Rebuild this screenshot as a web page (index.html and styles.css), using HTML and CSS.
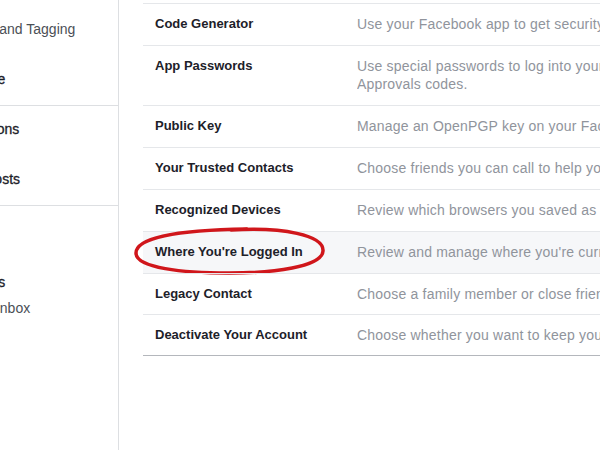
FILE: index.html
```html
<!DOCTYPE html>
<html lang="en">
<head>
    <meta charset="UTF-8">
    <title>Security Settings</title>
    <link rel="stylesheet" href="styles.css">
</head>
<body>
<div class="page">
    <!--左侧设置菜单-->
    <div class="sidebar">
        <ul class="group first">
            <li>Timeline and Tagging</li>
            <li>Blocking</li>
            <li class="dark">Language</li>
        </ul>
        <ul class="group">
            <li class="dark">Notifications</li>
            <li>Mobile</li>
            <li class="dark">Public Posts</li>
        </ul>
        <ul class="group last">
            <li>Apps</li>
            <li>Ads</li>
            <li class="dark">Payments</li>
            <li>Support Inbox</li>
            <li>Videos</li>
        </ul>
    </div>
    <!--安全设置列表-->
    <div class="main">
        <div class="settings">
            <div class="row">
                <div class="label">Code Generator</div>
                <div class="desc">Use your Facebook app to get security codes when you need them.</div>
            </div>
            <div class="row">
                <div class="label">App Passwords</div>
                <div class="desc">Use special passwords to log into your apps instead of using your Facebook password or Login<br>Approvals codes.</div>
            </div>
            <div class="row">
                <div class="label">Public Key</div>
                <div class="desc">Manage an OpenPGP key on your Facebook profile and enable encrypted notifications.</div>
            </div>
            <div class="row">
                <div class="label">Your Trusted Contacts</div>
                <div class="desc">Choose friends you can call to help you get back into your account if you get locked out.</div>
            </div>
            <div class="row">
                <div class="label">Recognized Devices</div>
                <div class="desc">Review which browsers you saved as ones you often use.</div>
            </div>
            <div class="row active">
                <div class="label">Where You're Logged In</div>
                <div class="desc">Review and manage where you're currently logged into Facebook.</div>
                <svg class="circle" width="200" height="56" viewBox="0 0 200 56">
                    <path d="M98 6 C150 3 191 11 190 27 C189 43 140 49 96 49 C50 49 3 44 3 29 C3 14 42 6 114 5" fill="none" stroke="#d0161b" stroke-width="3.5" stroke-linecap="round"/>
                </svg>
            </div>
            <div class="row">
                <div class="label">Legacy Contact</div>
                <div class="desc">Choose a family member or close friend to look after your account if something happens to you.</div>
            </div>
            <div class="row">
                <div class="label">Deactivate Your Account</div>
                <div class="desc">Choose whether you want to keep your account active or deactivate it.</div>
            </div>
        </div>
    </div>
</div>
</body>
</html>
```

FILE: styles.css
```css
*{
    margin: 0px;
    padding: 0px;
}
body
{
    font-family: "Liberation Sans", Arial, sans-serif;
    background-color: #FFFFFF;
}
.page
{
    display: flex;
    width: 600px;
    height: 450px;
    overflow: hidden;
}
.sidebar
{
    width: 118px;
    flex-shrink: 0;
    border-right: 1px solid #dddfe2;
    overflow: hidden;
}
.group
{
    list-style: none;
    padding: 11px 0px 13px 0px;
    border-bottom: 1px solid #dddfe2;
}
.group.first
{
    padding-top: 17px;
}
.group.last
{
    border-bottom: none;
}
.group.last li
{
    height: 26px;
    line-height: 26px;
}
.group li
{
    height: 25px;
    line-height: 25px;
    margin-left: -57px;
    font-size: 14px;
    color: #4b4f56;
    white-space: nowrap;
}
.group li.dark
{
    color: #1d2129;
    -webkit-text-stroke: 0.3px #1d2129;
}
.main
{
    flex: 1;
    padding: 3px 0px 0px 24px;
    overflow: hidden;
}
.settings
{
    border-bottom: 1px solid #b4b7bc;
}
.row
{
    display: grid;
    grid-template-columns: 214px 1fr;
    padding: 11px 0px 12px 0px;
    border-top: 1px solid #e5e7ea;
    line-height: 18px;
    font-size: 13px;
    position: relative;
}
.row:nth-child(n+7)
{
    padding-bottom: 11px;
}
.row.active
{
    background-color: #f6f7f9;
}
.label
{
    padding-left: 12px;
    font-weight: bold;
    color: #1d2129;
    white-space: nowrap;
}
.desc
{
    font-size: 14px;
    letter-spacing: 0.2px;
    color: #90949c;
    white-space: nowrap;
    overflow: hidden;
}
.circle
{
    position: absolute;
    left: -10px;
    top: -8px;
}
```
